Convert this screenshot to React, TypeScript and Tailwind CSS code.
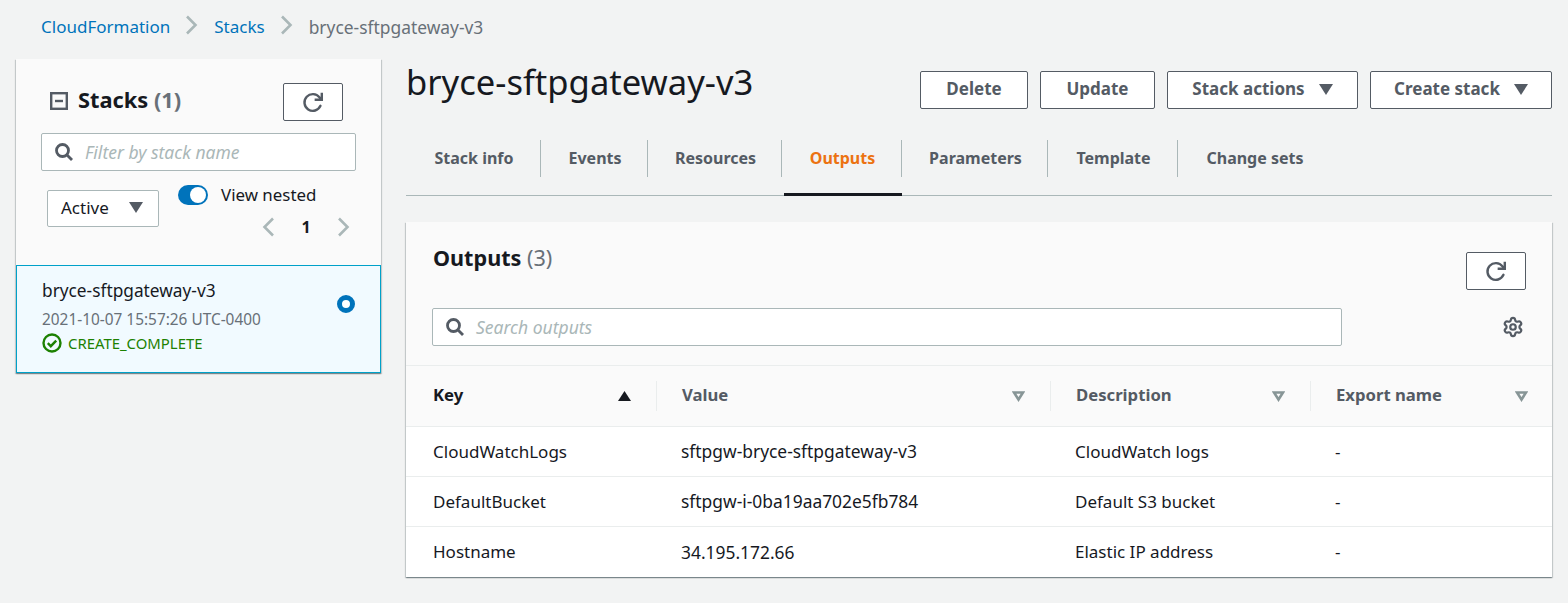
import { Settings } from 'lucide-react';

const tabs = [
  { label: 'Stack info', width: 'w-[135px]' },
  { label: 'Events', width: 'w-[107px]' },
  { label: 'Resources', width: 'w-[134px]' },
  { label: 'Outputs', width: 'w-[120px]' },
  { label: 'Parameters', width: 'w-[146px]' },
  { label: 'Template', width: 'w-[130px]' },
  { label: 'Change sets', width: 'w-[152px]' },
];

const rows = [
  { key: 'CloudWatchLogs', value: 'sftpgw-bryce-sftpgateway-v3', description: 'CloudWatch logs' },
  { key: 'DefaultBucket', value: 'sftpgw-i-0ba19aa702e5fb784', description: 'Default S3 bucket' },
  { key: 'Hostname', value: '34.195.172.66', description: 'Elastic IP address' },
];

function RefreshIcon() {
  return (
    <svg className="h-[22px] w-[22px]" viewBox="0 0 20 20" fill="none" stroke="#545b64" strokeWidth={2.2}>
      <path d="M16.8 13.5a7.6 7.6 0 1 1-.9-7.7L18 8" strokeLinecap="round" />
      <path d="M18 1.5V8h-6.5" />
    </svg>
  );
}

function SearchIcon() {
  return (
    <svg className="h-[18px] w-[18px]" viewBox="0 0 18 18" fill="none" stroke="#545b64" strokeWidth={2.8}>
      <circle cx="7.5" cy="7.5" r="6" />
      <path d="M12 12l5 5" />
    </svg>
  );
}

function Caret() {
  return (
    <svg className="h-[11px] w-[14px]" viewBox="0 0 14 11" fill="#545b64">
      <path d="M0 0h14L7 11z" />
    </svg>
  );
}

function SortCaret() {
  return (
    <svg className="h-[11px] w-[13px]" viewBox="0 0 13 11" fill="none" stroke="#879596" strokeWidth={2.6}>
      <path d="M2 1.5h9l-4.5 7z" />
    </svg>
  );
}

function Chevron({ left }: { left?: boolean }) {
  return (
    <svg className="h-5 w-[12px]" viewBox="0 0 12 20" fill="none" stroke="#aab7b8" strokeWidth={2.6}>
      <path d={left ? 'M11 1.5L2.5 10l8.5 8.5' : 'M1 1.5L9.5 10 1 18.5'} />
    </svg>
  );
}

function OutlineButton({ label, caret, className }: { label: string; caret?: boolean; className: string }) {
  return (
    <button
      className={`flex h-[38px] items-center justify-center gap-[14px] rounded-[2px] border border-[#545b64] bg-white pb-[2px] text-[17px] font-bold text-[#545b64] ${className}`}
    >
      {label}
      {caret && <Caret />}
    </button>
  );
}

function SearchBox({ placeholder, className }: { placeholder: string; className: string }) {
  return (
    <div className={`flex h-[38px] items-center gap-[12px] rounded-[2px] border border-[#aab7b8] bg-white pl-[13px] ${className}`}>
      <SearchIcon />
      <span className="text-[17.5px] italic text-[#aab7b8]">{placeholder}</span>
    </div>
  );
}

function StacksPanel() {
  return (
    <aside className="w-[365px] shrink-0 bg-[#fafafa] shadow-[0_1px_1px_0_rgba(0,28,36,0.3),1px_1px_1px_0_rgba(0,28,36,0.15),-1px_1px_1px_0_rgba(0,28,36,0.15)]">
      <div className="h-[206px] px-[25px] pt-[24px]">
        <div className="flex items-center justify-between pr-[13px]">
          <div className="mb-[3px] flex items-center gap-[10px] pl-[9px]">
            <svg className="h-[18px] w-[18px]" viewBox="0 0 18 18" fill="none" stroke="#545b64" strokeWidth={2.4}>
              <rect x="1.2" y="1.2" width="15.6" height="15.6" />
              <path d="M5 9h8" />
            </svg>
            <h2 className="text-[21.8px] font-bold text-[#16191f]">
              Stacks <span className="text-[#687078]">(1)</span>
            </h2>
          </div>
          <button className="flex h-[38px] w-[60px] items-center justify-center rounded-[2px] border border-[#545b64] bg-white">
            <RefreshIcon />
          </button>
        </div>
        <SearchBox placeholder="Filter by stack name" className="mt-[12px] w-[315px]" />
        <div className="mt-[15px] flex pl-[6px]">
          <div className="mt-[4px] flex h-[37px] w-[112px] items-center justify-between rounded-[2px] border border-[#aab7b8] bg-white pb-[2px] pl-[13px] pr-[15px] text-[17px] text-[#16191f]">
            Active
            <Caret />
          </div>
          <div className="ml-[19px] w-[175px]">
            <div className="mt-[-1px] flex h-5 items-center gap-[13px]">
              <span className="flex h-5 w-[30px] items-center justify-end rounded-full bg-[#0073bb] pr-[2px]">
                <span className="h-4 w-4 rounded-full bg-white" />
              </span>
              <span className="pb-[1px] text-[16.9px] text-[#16191f]">View nested</span>
            </div>
            <div className="mt-[10px] flex items-center justify-end gap-[20px] pr-[3px]">
              <Chevron left />
              <span className="w-[24px] text-center text-[16px] font-bold text-[#16191f]">1</span>
              <Chevron />
            </div>
          </div>
        </div>
      </div>
      <div className="flex h-[108px] items-center justify-between border border-[#00a1c9] bg-[#f1faff] pb-[6px] pl-[25px] pr-[25px]">
        <div>
          <div className="text-[17.3px] leading-[22px] text-[#16191f]">bryce-sftpgateway-v3</div>
          <div className="mt-[9px] text-[15.4px] leading-[18px] text-[#687078]">2021-10-07 15:57:26 UTC-0400</div>
          <div className="mt-[4px] flex items-center gap-[6px] text-[14.9px] leading-[18px] text-[#1d8102]">
            <svg className="h-5 w-5" viewBox="0 0 20 20" fill="none" stroke="#1d8102" strokeWidth={2.4}>
              <circle cx="10" cy="10" r="8.5" />
              <path d="M5.8 10.2l3 3 5.4-5.6" />
            </svg>
            CREATE_COMPLETE
          </div>
        </div>
        <span className="mb-[24px] h-[18px] w-[18px] rounded-full border-[5px] border-[#0073bb] bg-white" />
      </div>
    </aside>
  );
}

function Tabs() {
  return (
    <nav className="mt-[26px] flex h-[62px] border-b border-[#aab7b8]">
      {tabs.map((tab, i) => {
        const active = tab.label === 'Outputs';
        return (
          <div key={tab.label} className={`relative pt-[6px] ${tab.width}`}>
            <div
              className={`flex h-[37px] items-center justify-center pb-[2px] pl-[2px] text-[16px] font-bold ${
                i < tabs.length - 1 ? 'border-r border-[#aab7b8]' : ''
              } ${active ? 'text-[#ec7211]' : 'text-[#545b64]'}`}
            >
              {tab.label}
            </div>
            {active && <div className="absolute bottom-[-1px] left-[2px] right-0 h-[3px] bg-[#16191f]" />}
          </div>
        );
      })}
    </nav>
  );
}

function HeadCell({ label, first, sorted }: { label: string; first?: boolean; sorted?: boolean }) {
  return (
    <div className={`flex h-[60px] items-center ${first ? '' : 'pl-[1px]'}`}>
      <div
        className={`flex h-[30px] w-full items-center justify-between pr-[24px] text-[16.7px] font-bold ${
          first ? 'pl-[27px]' : 'border-l border-[#eaeded] pl-[25px]'
        } ${sorted ? 'text-[#16191f]' : 'text-[#545b64]'}`}
      >
        <span className="pb-[2px]">{label}</span>
        {sorted ? (
          <svg className="h-[10px] w-[13px]" viewBox="0 0 13 10" fill="#16191f">
            <path d="M0 10L6.5 0 13 10z" />
          </svg>
        ) : (
          <SortCaret />
        )}
      </div>
    </div>
  );
}

function OutputsCard() {
  return (
    <section className="mt-[26px] overflow-hidden bg-white shadow-[0_1px_1px_0_rgba(0,28,36,0.3),1px_1px_1px_0_rgba(0,28,36,0.15),-1px_1px_1px_0_rgba(0,28,36,0.15)]">
      <div className="h-[144px] border-b border-[#eaeded] bg-[#fafafa] pl-[26px] pr-[26px] pt-[20px]">
        <div className="flex items-start justify-between">
          <h3 className="pl-[1px] text-[21.6px] font-bold text-[#16191f]">
            Outputs <span className="font-normal text-[#687078]">(3)</span>
          </h3>
          <button className="mt-[10px] flex h-[38px] w-[60px] items-center justify-center rounded-[2px] border border-[#545b64] bg-white">
            <RefreshIcon />
          </button>
        </div>
        <div className="mt-[18px] flex items-center justify-between pr-[2px]">
          <SearchBox placeholder="Search outputs" className="w-[910px]" />
          <Settings className="h-[22px] w-[22px] text-[#545b64]" strokeWidth={2.4} />
        </div>
      </div>
      <div className="grid grid-cols-[249px_394px_260px_1fr] border-b border-[#eaeded] bg-[#fafafa]">
        <HeadCell label="Key" first sorted />
        <HeadCell label="Value" />
        <HeadCell label="Description" />
        <HeadCell label="Export name" />
      </div>
      {rows.map((row, i) => (
        <div
          key={row.key}
          className={`grid h-[50px] grid-cols-[249px_394px_260px_1fr] items-center text-[17px] text-[#16191f] ${
            i < rows.length - 1 ? 'border-b border-[#eaeded]' : ''
          }`}
        >
          <div className="pl-[27px]">{row.key}</div>
          <div className="pl-[26px] text-[17.4px]">{row.value}</div>
          <div className="pl-[26px]">{row.description}</div>
          <div className="pl-[26px]">-</div>
        </div>
      ))}
    </section>
  );
}

export default function App() {
  return (
    <div className="h-screen overflow-hidden bg-[#f2f3f3] font-['Noto_Sans',sans-serif]">
      <div className="flex h-[59px] items-start gap-[16px] pl-[41px] pt-[15px] text-[17px] leading-[24px]">
        <a className="text-[#0073bb]">CloudFormation</a>
        <Chevron />
        <a className="text-[#0073bb]">Stacks</a>
        <Chevron />
        <span className="text-[17.4px] text-[#687078]">bryce-sftpgateway-v3</span>
      </div>
      <div className="flex items-start gap-[25px] pl-4 pr-4">
        <StacksPanel />
        <main className="min-w-0 flex-1">
          <div className="flex h-[49px] items-start justify-between">
            <h1 className="mt-[-2px] text-[34.6px] leading-[50px] text-[#16191f]">bryce-sftpgateway-v3</h1>
            <div className="mt-[12px] flex gap-3">
              <OutlineButton label="Delete" className="w-[108px]" />
              <OutlineButton label="Update" className="w-[115px]" />
              <OutlineButton label="Stack actions" caret className="w-[191px]" />
              <OutlineButton label="Create stack" caret className="w-[182px]" />
            </div>
          </div>
          <Tabs />
          <OutputsCard />
        </main>
      </div>
    </div>
  );
}
